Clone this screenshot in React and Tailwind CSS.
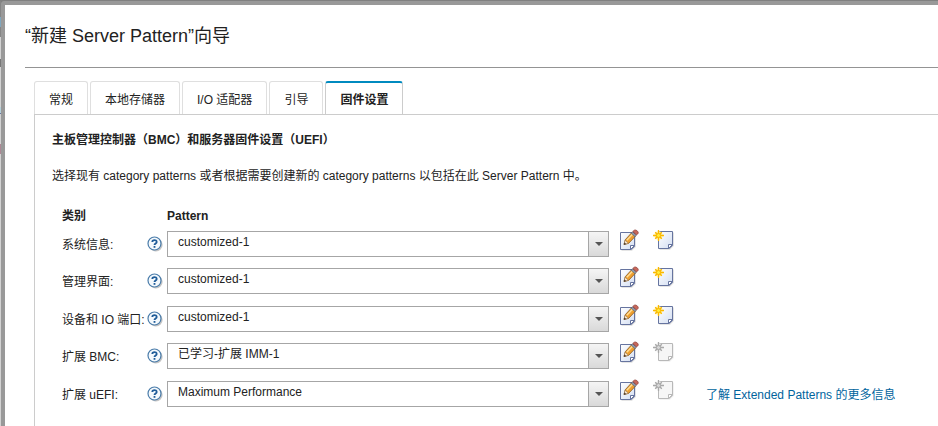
import React, { useState } from "react";

const tabs = ["常规", "本地存储器", "I/O 适配器", "引导", "固件设置"];

const categories = [
	{ id: "system", label: "系统信息:", options: ["customized-1"], canCreate: true },
	{ id: "management", label: "管理界面:", options: ["customized-1"], canCreate: true },
	{ id: "ports", label: "设备和 IO 端口:", options: ["customized-1"], canCreate: true },
	{ id: "bmc", label: "扩展 BMC:", options: ["已学习-扩展 IMM-1"], canCreate: false },
	{
		id: "uefi",
		label: "扩展 uEFI:",
		options: ["Maximum Performance"],
		canCreate: false,
		link: "了解 Extended Patterns 的更多信息",
	},
];

const HelpIcon = () => (
	<svg width="16" height="16" viewBox="0 0 16 16" className="block">
		<circle cx="8.8" cy="8.8" r="6.8" fill="#c4c4c4" />
		<circle cx="7.5" cy="7.5" r="6.5" fill="#f4f9fd" stroke="#4a7caa" strokeWidth="1.2" />
		<path
			d="M5.3 6C5.3 3.6 9.7 3.6 9.7 5.9C9.7 7.4 7.5 7.4 7.5 9"
			fill="none"
			stroke="#1f5c99"
			strokeWidth="1.8"
		/>
		<rect x="6.6" y="10" width="1.8" height="1.8" fill="#1f5c99" />
	</svg>
);

const EditIcon = () => (
	<svg width="20" height="22" viewBox="0 0 20 22" className="block">
		<defs>
			<linearGradient id="editPage" x1="0" y1="0" x2="1" y2="1">
				<stop offset="0" stopColor="#ffffff" />
				<stop offset="1" stopColor="#d3def2" />
			</linearGradient>
		</defs>
		<path d="M2.5 4.5H16.8V18L13 21.8H2.5Z" fill="#dcdcdc" />
		<path
			d="M1.5 3.5H15.5V17.5L12 20.5H1.5Z"
			fill="url(#editPage)"
			stroke="#66749f"
			strokeWidth="1"
		/>
		<path d="M11.5 20.5V16.5H15.5Z" fill="#ffffff" stroke="#66749f" strokeWidth="1" />
		<path
			d="M5 15.5L6.2 10.8L12.6 3.8L16.4 7.2L9.6 14.4Z"
			fill="#efa030"
			stroke="#8a5a20"
			strokeWidth="0.8"
		/>
		<path d="M7.8 11.2L14 4.8" stroke="#ffdf98" strokeWidth="1.4" />
		<path d="M5 15.5L6.1 11.2L9.4 14.2Z" fill="#f7e6cc" stroke="#8a6a48" strokeWidth="0.5" />
		<path d="M4.8 15.8L5.5 13.6L7.1 15Z" fill="#332820" />
		<path d="M12.2 4.2L13.6 2.7L17.4 6.1L15.9 7.7Z" fill="#8e98a8" stroke="#58606e" strokeWidth="0.6" />
		<path
			d="M13.8 2.5L15.2 1.2Q16.8 0.5 18.3 1.9T19.1 4.4L17.6 5.9Z"
			fill="#c8685a"
			stroke="#8e3d36"
			strokeWidth="0.7"
		/>
	</svg>
);

const NewIcon = ({ disabled }) => {
	const line = disabled ? "#b8b8b8" : "#66749f";
	const star = disabled ? "#a8a8a8" : "#fbb800";
	return (
		<svg width="22" height="22" viewBox="0 0 22 22" className="block">
			<defs>
				<linearGradient id="newPage" x1="0" y1="0" x2="1" y2="1">
					<stop offset="0" stopColor="#ffffff" />
					<stop offset="1" stopColor="#d3def2" />
				</linearGradient>
			</defs>
			<path d="M6.5 3.5H20.8V17L17 20.8H6.5Z" fill={disabled ? "#efefef" : "#dcdcdc"} />
			<path
				d="M5.5 2.5H19.5V16.5L16 19.5H5.5Z"
				fill={disabled ? "#f6f6f6" : "url(#newPage)"}
				stroke={line}
				strokeWidth="1"
			/>
			<path d="M15.5 19.5V15.5H19.5Z" fill="#ffffff" stroke={line} strokeWidth="1" />
			<circle cx="5.5" cy="6.5" r="4.2" fill={disabled ? "#f0f0f0" : "#fff0a0"} />
			<path
				d="M5.5 1V12M0 6.5H11M2.2 3.2L8.8 9.8M8.8 3.2L2.2 9.8"
				stroke={star}
				strokeWidth="1.3"
				fill="none"
			/>
			<circle
				cx="5.5"
				cy="6.5"
				r="2"
				fill={disabled ? "#d8d8d8" : "#ffee3c"}
				stroke={star}
				strokeWidth="1"
			/>
		</svg>
	);
};

const PatternRow = ({ category }) => {
	const [pattern, setPattern] = useState(category.options[0]);

	return (
		<tr className="h-[37px] even:h-[38px]">
			<td className="w-[85px] p-0 pt-0.5 whitespace-nowrap">
				<label htmlFor={category.id}>{category.label}</label>
			</td>
			<td className="w-5 p-0">
				<button type="button" aria-label="帮助" className="block">
					<HelpIcon />
				</button>
			</td>
			<td className="w-[442px] p-0">
				<div className="relative">
					<select
						id={category.id}
						value={pattern}
						onChange={(e) => setPattern(e.target.value)}
						className="block h-[26px] w-full appearance-none border border-[#a6a6a6] bg-white pr-6 pb-1 pl-2.5 leading-4"
					>
						{category.options.map((option) => (
							<option key={option}>{option}</option>
						))}
					</select>
					<span className="pointer-events-none absolute inset-y-0 right-0 flex w-[21px] items-center justify-center border border-[#a6a6a6] bg-linear-to-b from-[#f5f5f5] to-[#d9d9d9]">
						<svg width="8" height="4" viewBox="0 0 8 4">
							<path d="M0 0H8L4 4Z" fill="#555555" />
						</svg>
					</span>
				</div>
			</td>
			<td className="w-11 p-0 pb-2 pl-2.5">
				<button type="button" aria-label="编辑" className="block">
					<EditIcon />
				</button>
			</td>
			<td className="w-[53px] p-0 pb-2">
				<button
					type="button"
					aria-label="新建"
					disabled={!category.canCreate}
					className="block"
				>
					<NewIcon disabled={!category.canCreate} />
				</button>
			</td>
			<td className="p-0 pt-0.5 whitespace-nowrap">
				{category.link && (
					<a href="#extended-patterns" className="text-[#00649d] hover:underline">
						{category.link}
					</a>
				)}
			</td>
		</tr>
	);
};

// sliver of the dimmed page behind the dialog
const Backdrop = () => (
	<div className="flex w-px flex-col bg-[#d2d2d2]">
		<span className="h-4 bg-[#858585]" />
		<span className="h-2.5 bg-[#7fa6bd]" />
		<span className="h-2.5 bg-[#858585]" />
		<span className="mt-[22px] h-2 bg-[#777777]" />
		<span className="mt-10 h-1.5 bg-[#b4d0da]" />
		<span className="h-px bg-[#66749f]" />
		<span className="mt-[30px] h-2.5 bg-[#ad8895]" />
	</div>
);

const App = () => {
	const [active, setActive] = useState("固件设置");

	return (
		<div className="flex min-h-screen border-t border-[#808080] bg-[#808080] font-['Liberation_Sans','Noto_Sans_CJK_SC',sans-serif] text-xs leading-4 text-[#222222]">
			<Backdrop />
			<div className="flex min-w-0 flex-1 flex-col rounded-tl-sm border-t-4 border-l-4 border-[#999999] bg-white pl-5">
				<h1 className="pt-[19px] text-lg leading-6">“新建 Server Pattern”向导</h1>
				<hr className="mt-[19px] border-[#949494]" />
				<div className="flex flex-1 flex-col pt-[13px] pl-[9px]">
					<div role="tablist" className="flex items-end gap-0.5">
						{tabs.map((tab) => (
							<button
								key={tab}
								type="button"
								role="tab"
								aria-selected={tab === active}
								onClick={() => setActive(tab)}
								className={
									tab === active
										? "-mb-px h-[34px] rounded-t-[3px] border-x border-t-2 border-x-[#cccccc] border-t-[#008abf] bg-white px-3.5 pt-0.5 font-bold whitespace-nowrap"
										: "h-[33px] rounded-t-[3px] border-x border-t border-[#dfdfdf] bg-white px-3.5 pt-1 whitespace-nowrap"
								}
							>
								{tab}
							</button>
						))}
					</div>
					<div
						role="tabpanel"
						className="flex-1 border-t border-l border-[#cccccc] pt-[17px] pb-3 pl-[17px]"
					>
						<h2 className="font-bold">主板管理控制器（BMC）和服务器固件设置（UEFI）</h2>
						<p className="mt-5">
							选择现有 category patterns 或者根据需要创建新的 category patterns 以包括在此
							Server Pattern 中。
						</p>
						<table className="mt-[23px] ml-2.5 border-collapse text-left">
							<thead>
								<tr className="h-[18px]">
									<th colSpan="2" className="p-0 font-bold">类别</th>
									<th colSpan="4" className="p-0 font-bold">Pattern</th>
								</tr>
							</thead>
							<tbody>
								{categories.map((category) => (
									<PatternRow key={category.id} category={category} />
								))}
							</tbody>
						</table>
					</div>
				</div>
			</div>
		</div>
	);
};

export default App;
